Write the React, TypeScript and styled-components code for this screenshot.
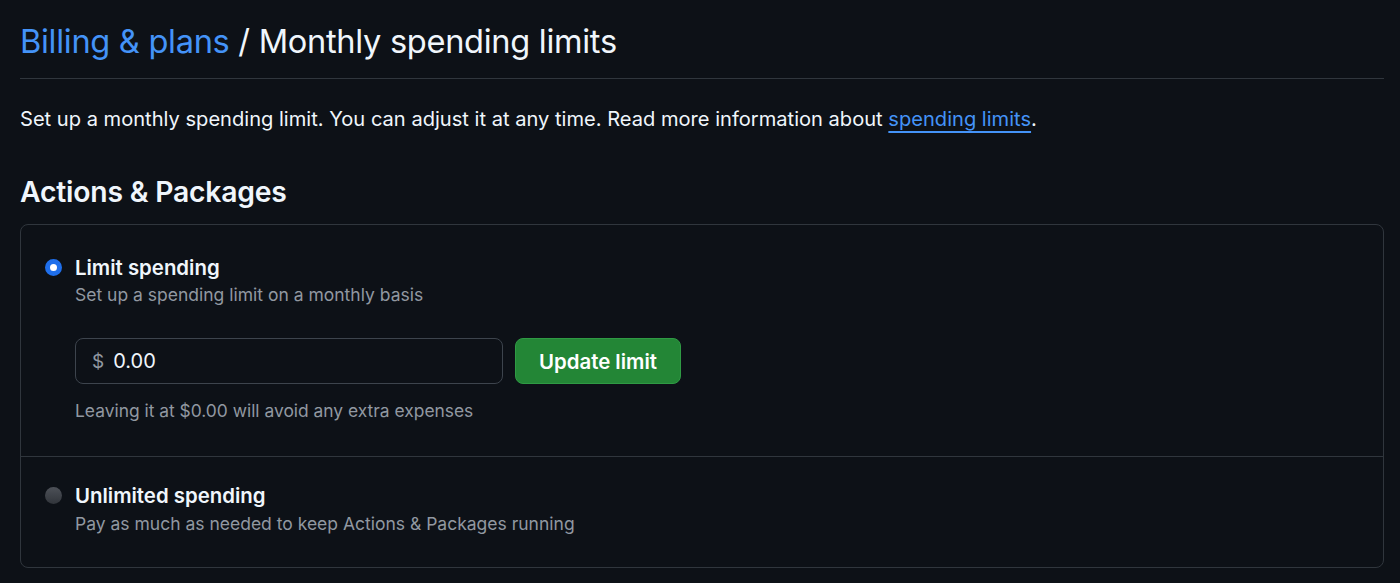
import React from "react";
import styled, { createGlobalStyle } from "styled-components";

const Global = createGlobalStyle`
  html, body { margin: 0; padding: 0; background: #0d1117; }
  body { font-family: Inter, "Noto Sans", "Liberation Sans", sans-serif; color: #e6edf3; }
`;

const Page = styled.div`
  padding: 20px 16px 0 20px;
  background: #0d1117;
  min-height: 583px;
  box-sizing: border-box;
`;

const Header = styled.h1`
  margin: 0;
  font-size: 32.6px;
  font-weight: 400;
  line-height: 42px;
  letter-spacing: -0.3px;
  color: #f0f6fc;
  padding-bottom: 16px;
  border-bottom: 1px solid #30363d;
`;

const Crumb = styled.a`
  color: #4493f8;
  text-decoration: none;
`;

const Intro = styled.p`
  margin: 27px 0 0;
  font-size: 20.1px;
  line-height: 27px;
  color: #f0f6fc;
`;

const Link = styled.a`
  color: #4493f8;
  text-decoration: underline;
  text-underline-offset: 5px;
  text-decoration-thickness: 1.5px;
`;

const SectionTitle = styled.h2`
  margin: 41px 0 0;
  font-size: 28.3px;
  font-weight: 600;
  line-height: 36px;
  letter-spacing: -0.2px;
  color: #f0f6fc;
`;

const Box = styled.div`
  margin-top: 14px;
  border: 1px solid #30363d;
  border-radius: 8px;
`;

const Option = styled.div<{ $last?: boolean }>`
  display: grid;
  grid-template-columns: 17px 1fr;
  column-gap: 13px;
  padding: ${(p) => (p.$last ? "27px 24px 32px" : "31px 24px 34px")};
  border-bottom: ${(p) => (p.$last ? "none" : "1px solid #30363d")};
`;

const Radio = styled.span<{ $checked?: boolean }>`
  width: 17px;
  height: 17px;
  margin-top: 3px;
  border-radius: 50%;
  box-sizing: border-box;
  ${(p) =>
    p.$checked
      ? "background: #fff; border: 5px solid #1f6feb;"
      : "background: linear-gradient(#4d5158, #31353b);"}
`;

const Body = styled.div`
  display: flex;
  flex-direction: column;
`;

const Label = styled.div`
  font-size: 20.4px;
  font-weight: 600;
  line-height: 24px;
  color: #f0f6fc;
`;

const Hint = styled.div<{ $gap?: number }>`
  margin-top: ${(p) => p.$gap ?? 4}px;
  font-size: 17.5px;
  line-height: 22px;
  color: #9198a1;
`;

const Row = styled.div`
  display: flex;
  gap: 12px;
  margin-top: 32px;
`;

const InputWrap = styled.label`
  display: flex;
  align-items: center;
  width: 428px;
  height: 46px;
  box-sizing: border-box;
  border: 1px solid #3d444d;
  border-radius: 8px;
  padding: 0 16px;
  background: #0d1117;
`;

const Prefix = styled.span`
  font-size: 19px;
  color: #9198a1;
  margin-right: 9px;
`;

const Input = styled.input`
  flex: 1;
  border: none;
  outline: none;
  background: transparent;
  color: #f0f6fc;
  font-family: inherit;
  font-size: 20px;
  padding: 0;
`;

const Button = styled.button`
  height: 46px;
  padding: 0 23px;
  border-radius: 8px;
  border: 1px solid #2f9a44;
  background: #238636;
  color: #fff;
  font-family: inherit;
  font-size: 20.4px;
  font-weight: 600;
`;

const Note = styled.div`
  margin-top: 16px;
  font-size: 17.4px;
  line-height: 22px;
  color: #9198a1;
`;

export default function App() {
  return (
    <>
      <Global />
      <Page>
        <Header>
          <Crumb href="#">Billing &amp; plans</Crumb> / Monthly spending limits
        </Header>
        <Intro>
          Set up a monthly spending limit. You can adjust it at any time. Read more information about{" "}
          <Link href="#">spending limits</Link>.
        </Intro>
        <SectionTitle>Actions &amp; Packages</SectionTitle>
        <Box>
          <Option>
            <Radio $checked />
            <Body>
              <Label>Limit spending</Label>
              <Hint>Set up a spending limit on a monthly basis</Hint>
              <Row>
                <InputWrap>
                  <Prefix>$</Prefix>
                  <Input defaultValue="0.00" />
                </InputWrap>
                <Button>Update limit</Button>
              </Row>
              <Note>Leaving it at $0.00 will avoid any extra expenses</Note>
            </Body>
          </Option>
          <Option $last>
            <Radio />
            <Body>
              <Label>Unlimited spending</Label>
              <Hint $gap={5}>Pay as much as needed to keep Actions &amp; Packages running</Hint>
            </Body>
          </Option>
        </Box>
      </Page>
    </>
  );
}
